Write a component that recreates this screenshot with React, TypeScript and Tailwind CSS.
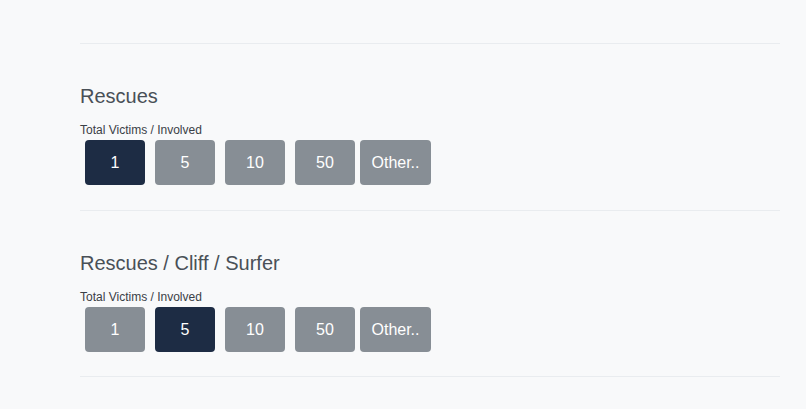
import React from "react";

const values = ["1", "5", "10", "50"];

function Section({ title, selected, last }: { title: string; selected: string; last?: boolean }) {
  return (
    <div className={"border-t border-[#e9ecef] pt-[40px] " + (last ? "pb-[24px]" : "pb-[25px]")}>
      <h2 className="text-[20px] leading-[24px] text-[#495057] font-normal">{title}</h2>
      <div className="mt-[15px] text-[12px] leading-[14px] text-[#3a4046]">Total Victims / Involved</div>
      <div className="mt-[3px] flex">
        {values.map((v) => (
          <button
            key={v}
            className={
              "mx-[5px] w-[60px] h-[45px] rounded-[4px] text-white text-[16px] leading-none flex items-center justify-center " +
              (v === selected ? "bg-[#1d2c44]" : "bg-[#878e95]")
            }
          >
            {v}
          </button>
        ))}
        <button className="h-[45px] w-[71px] rounded-[4px] bg-[#878e95] text-white text-[16px] leading-none flex items-center justify-center">
          Other..
        </button>
      </div>
    </div>
  );
}

export default function App() {
  return (
    <div
      className="w-[806px] h-[409px] bg-[#f8f9fa] overflow-hidden pt-[43px]"
      style={{ fontFamily: '"Liberation Sans", Arial, Helvetica, sans-serif' }}
    >
      <div className="ml-[80px] w-[700px]">
        <Section title="Rescues" selected="1" />
        <Section title="Rescues / Cliff / Surfer" selected="5" last />
        <div className="border-t border-[#e9ecef]" />
      </div>
    </div>
  );
}
